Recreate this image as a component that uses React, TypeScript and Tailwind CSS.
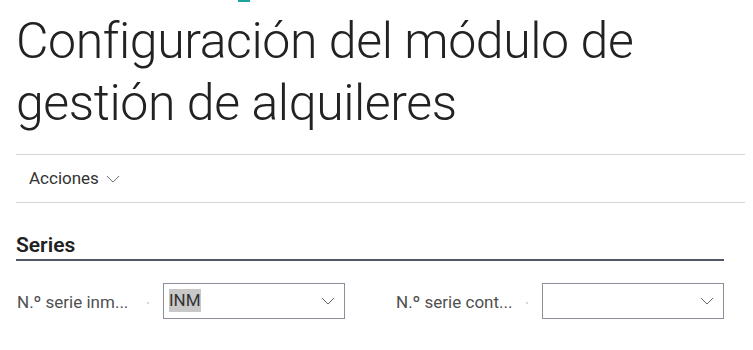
import React from 'react';

const font = { fontFamily: 'Roboto, "Open Sans", sans-serif' };

function Chevron({ className }: { className?: string }) {
  return (
    <svg viewBox="0 0 16 9" className={className} fill="none" stroke="currentColor" strokeWidth="1.1">
      <polyline points="1,1 8,8 15,1" />
    </svg>
  );
}

function LookupField({ label, value }: { label: string; value?: string }) {
  return (
    <div className="flex items-center w-[329px]">
      <div className="w-[131px] pl-[1px] pt-[3px] text-[17px] text-[#505050] truncate">{label}</div>
      <div className="w-[2px] h-[2px] mt-[4px] bg-[#c8c8c8] rounded-full mr-[14px]" />
      <div className="flex-1 h-[36px] border border-[#8a8f99] flex items-center pl-[5px] pr-[9px]">
        <div className="flex-1 text-[17px] text-[#333]">
          {value && <span className="bg-[#c8c8c8] leading-[23px] inline-block">{value}</span>}
        </div>
        <Chevron className="w-[14px] h-[8px] text-[#5a5a5a]" />
      </div>
    </div>
  );
}

export default function App() {
  return (
    <div className="w-[753px] h-[350px] overflow-hidden bg-white" style={font}>
      <div className="h-[2px] w-[12px] ml-[238px] bg-[#1aa39a]" />

      {/* Title */}
      <h1 className="pl-4 pt-[8px] text-[50px] font-light leading-[62px] tracking-[-0.4px] text-[#222]">
        Configuración del módulo de
        <br />
        gestión de alquileres
      </h1>

      {/* Action bar */}
      <div className="ml-4 mr-2 mt-[20px] border-t border-b border-[#d4d4d9] h-[49px] flex items-center pl-[13px] gap-[7px]">
        <span className="text-[17px] text-[#333]">Acciones</span>
        <Chevron className="w-[14px] h-[8px] text-[#666]" />
      </div>

      {/* Series */}
      <div className="ml-4 mr-[29px] mt-[29px]">
        <div className="border-b-2 border-[#505866] pb-[1px]">
          <span className="block text-[21px] font-semibold text-[#212121] leading-[26px]">Series</span>
        </div>
        <div className="flex justify-between mt-[22px]">
          <LookupField label="N.º serie inm..." value="INM" />
          <LookupField label="N.º serie cont..." />
        </div>
      </div>
    </div>
  );
}
